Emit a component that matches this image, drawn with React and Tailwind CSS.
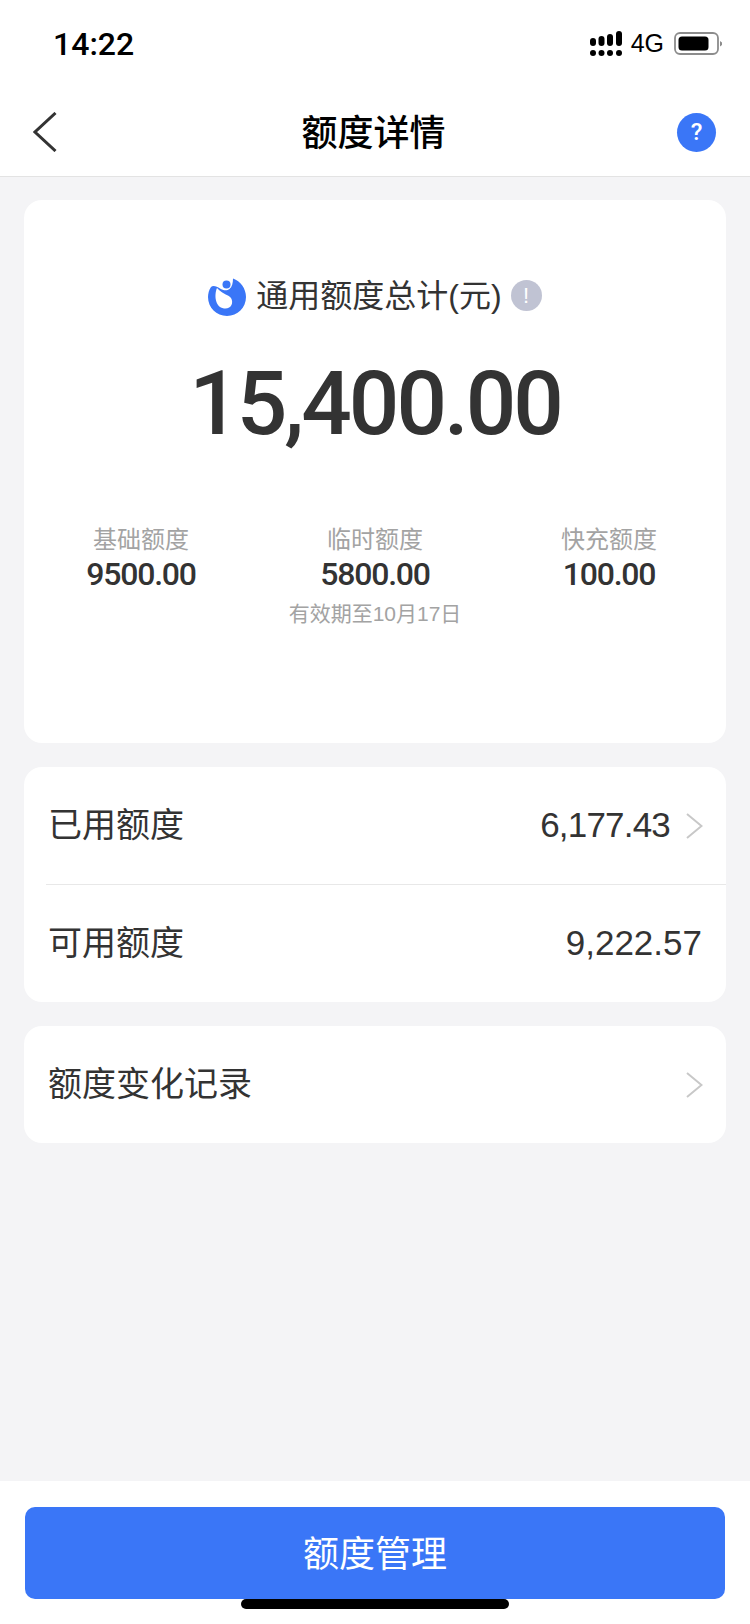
import React from "react";

const CJK = "font-['Liberation_Sans','Noto_Sans_CJK_SC',sans-serif]";
const DIN = "font-['Roboto','Noto_Sans_CJK_SC',sans-serif]";

const SignalIcon = () => (
  <svg width="34" height="26" viewBox="0 0 34 26" fill="#000">
    <rect x="0" y="7" width="6" height="8" rx="3" />
    <rect x="8.5" y="5" width="6" height="10" rx="3" />
    <rect x="17" y="3" width="6" height="12" rx="3" />
    <rect x="26" y="0" width="6" height="15" rx="3" />
    <circle cx="3" cy="22" r="3" />
    <circle cx="11.5" cy="22" r="3" />
    <circle cx="20" cy="22" r="3" />
    <circle cx="29" cy="22" r="3" />
  </svg>
);

const BatteryIcon = () => (
  <svg width="48" height="24" viewBox="0 0 48 24">
    <rect x="1" y="1" width="43" height="21" rx="5" fill="none" stroke="#8c8c8c" strokeWidth="1.8" />
    <rect x="4.5" y="4.5" width="30" height="14" rx="3.5" fill="#000" />
    <path d="M46 9 L48 10.5 V13 L46 14.5 Z" fill="#8c8c8c" />
  </svg>
);

const BackIcon = () => (
  <svg width="24" height="40" viewBox="0 0 24 40" fill="none" stroke="#333333" strokeWidth="3">
    <path d="M22.5 1 L2 20 L22.5 39" strokeLinejoin="miter" />
  </svg>
);

const ArrowIcon = () => (
  <svg width="17" height="26" viewBox="0 0 17 26" fill="none" stroke="#c8c8c8" strokeWidth="2">
    <path d="M1 1 L15.5 13 L1 25" />
  </svg>
);

const Logo = () => (
  <svg className="mt-[3px]" width="38" height="38" viewBox="0 0 38 38">
    <path
      d="M25 0.5 C32.5 3 38 10.5 38 19 C38 29.5 29.5 38 19 38 C8.5 38 0 29.5 0 19 C0 15.5 1 12 3 9 C5 7 9 8.5 12 10.5 C15 12.5 19 13 21.5 11 C24 9 25 5 25 0.5 Z"
      fill="#3a76f7"
    />
    <path d="M9 10 C6 17 7 29 16 30.5 C23 31.5 26 25 23 20 C21 17 15 16 11 12 Z" fill="#fff" />
    <circle cx="18.5" cy="6.5" r="4" fill="#3a76f7" />
  </svg>
);

const Stat = ({ label, value, note }) => (
  <div className="relative flex flex-col items-center">
    <div className="text-[24px] leading-[32px] text-[#a3a3a3]">{label}</div>
    <div className={`${DIN} text-[32px] leading-[36px] font-medium tracking-[-1.2px] text-[#333333]`}>{value}</div>
    {note && (
      <div className="absolute top-[76px] whitespace-nowrap text-[21px] leading-[28px] text-[#a3a3a3]">{note}</div>
    )}
  </div>
);

const Row = ({ label, value, arrow, valueClass = "" }) => (
  <div className="flex h-[117px] items-center justify-between pl-[24px] pr-[23px]">
    <span className="text-[34px] text-[#333333]">{label}</span>
    <span className="flex items-center">
      <span className={`text-[35px] text-[#333333] ${valueClass}`}>{value}</span>
      {arrow && <span className="ml-[16px] flex"><ArrowIcon /></span>}
    </span>
  </div>
);

export default function App() {
  return (
    <div className={`${CJK} flex h-[1624px] w-[750px] flex-col overflow-hidden bg-[#f4f4f6]`}>
      {/* Status bar */}
      <div className="flex h-[88px] items-center justify-between bg-white pl-[53px] pr-[28px]">
        <span className={`${DIN} text-[32px] font-medium text-black`}>14:22</span>
        <div className="flex items-center">
          <SignalIcon />
          <span className="ml-[7px] mr-[10px] text-[25px] text-black">4G</span>
          <BatteryIcon />
        </div>
      </div>

      {/* Nav */}
      <div className="flex h-[89px] items-center justify-between border-b border-[#e3e3e3] bg-white pl-[33px] pr-[34px]">
        <BackIcon />
        <h1 className="pt-[3px] pl-[13px] text-[36px] font-medium text-black">额度详情</h1>
        <div className={`${DIN} flex h-[39px] w-[39px] items-center justify-center rounded-full bg-[#3a76f7] text-[24px] font-medium text-white`}>?</div>
      </div>

      <main className="flex flex-1 flex-col gap-[24px] px-[24px] pt-[23px]">
        {/* Total card */}
        <section className="h-[543px] rounded-[18px] bg-white pt-[75px]">
          <div className="flex items-center justify-center">
            <Logo />
            <span className="ml-[10px] text-[32px] leading-[38px] text-[#333333]">通用额度总计(元)</span>
            <span className="ml-[9px] flex h-[31px] w-[31px] items-center justify-center rounded-full bg-[#c0c3d3] text-[22px] text-white">!</span>
          </div>
          <div className={`${DIN} mt-[33px] text-center text-[89px] leading-[110px] font-medium tracking-[-3px] text-[#333333]`}>15,400.00</div>
          <div className="mt-[65px] grid grid-cols-3">
            <Stat label="基础额度" value="9500.00" />
            <Stat label="临时额度" value="5800.00" note="有效期至10月17日" />
            <Stat label="快充额度" value="100.00" />
          </div>
        </section>

        {/* Used and available */}
        <section className="rounded-[18px] bg-white">
          <Row label="已用额度" value="6,177.43" arrow valueClass="tracking-[-0.8px]" />
          <div className="ml-[22px] border-t border-[#e8e8e8]" />
          <Row label="可用额度" value="9,222.57" valueClass="pr-[1px]" />
        </section>

        {/* History */}
        <section className="rounded-[18px] bg-white">
          <Row label="额度变化记录" value="" arrow />
        </section>
      </main>

      {/* Footer button */}
      <div className="relative h-[143px] bg-white px-[25px] pt-[26px]">
        <button className="h-[92px] w-full rounded-[10px] bg-[#3a76f7] pt-[3px] text-[36px] text-white">额度管理</button>
        <div className="absolute bottom-[15px] left-[241px] h-[10px] w-[268px] rounded-full bg-black" />
      </div>
    </div>
  );
}
